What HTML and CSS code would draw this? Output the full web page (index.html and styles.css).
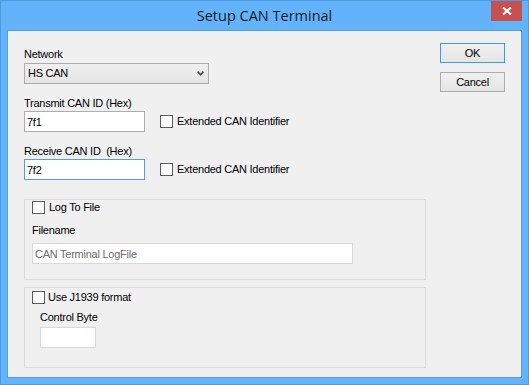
FILE: index.html
```
<!DOCTYPE html>
<html lang="en">
<head>
  <meta charset="UTF-8">
  <title>Setup CAN Terminal</title>
  <link rel="stylesheet" href="styles.css">
</head>
<body>
  <div class="window">
    <div class="titlebar">
      <h1 class="title">Setup CAN Terminal</h1>
      <button class="close" type="button" aria-label="Close">
        <svg width="10" height="8" viewBox="0 0 10 8">
          <path d="M1 0.5 L9 7.5 M9 0.5 L1 7.5" stroke="#fff" stroke-width="2" fill="none"/>
        </svg>
      </button>
    </div>

    <div class="client">
      <form class="form">
        <label class="label">Network</label>
        <div class="combo">
          <span>HS CAN</span>
          <svg width="7" height="5" viewBox="0 0 7 5">
            <path d="M0.6 0.6 L3.5 3.8 L6.4 0.6" stroke="#4a4a4a" stroke-width="1.6" fill="none"/>
          </svg>
        </div>

        <label class="label gap-top" for="txId">Transmit CAN ID (Hex)</label>
        <div class="id-row">
          <input class="textbox id-box" id="txId" type="text" value="7f1">
          <label class="check ext"><input type="checkbox"> Extended CAN Identifier</label>
        </div>

        <label class="label gap-top" for="rxId">Receive CAN ID&nbsp; (Hex)</label>
        <div class="id-row">
          <input class="textbox id-box focused" id="rxId" type="text" value="7f2">
          <label class="check ext"><input type="checkbox"> Extended CAN Identifier</label>
        </div>

        <div class="group log-group">
          <label class="check"><input type="checkbox"> Log To File</label>
          <label class="label filename-label" for="logName">Filename</label>
          <input class="textbox disabled filename" id="logName" type="text" value="CAN Terminal LogFile" disabled>
        </div>

        <div class="group j1939-group">
          <label class="check narrow"><input type="checkbox"> Use J1939 format</label>
          <label class="label control-label" for="ctrlByte">Control Byte</label>
          <input class="textbox disabled control-box" id="ctrlByte" type="text" disabled>
        </div>
      </form>

      <div class="actions">
        <button class="btn default" type="button">OK</button>
        <button class="btn" type="button">Cancel</button>
      </div>
    </div>
  </div>
</body>
</html>
```

FILE: styles.css
```
/* Reset */
* {
  margin: 0;
  padding: 0;
  box-sizing: border-box;
}

body {
  font-family: 'Liberation Sans', Arial, sans-serif;
  font-size: 11px;
  line-height: 13px;
  letter-spacing: -0.25px;
  color: #000;
  background-color: #fff;
}

/* Window frame */
.window {
  width: 529px;
  height: 385px;
  background-color: #63b3fc;
  border: 1px solid #4e9ade;
  display: flex;
  flex-direction: column;
}

.titlebar {
  height: 29px;
  display: grid;
  grid-template-columns: 1fr auto 1fr;
  align-items: start;
}

.title {
  grid-column: 2;
  font-family: 'Open Sans', 'Noto Sans', sans-serif;
  font-size: 14.5px;
  font-weight: 400;
  line-height: 29px;
  letter-spacing: 0;
  color: #1b1b1b;
}

.close {
  grid-column: 3;
  justify-self: end;
  margin-right: 6px;
  width: 31px;
  height: 20px;
  border: none;
  background-color: #c75050;
  display: flex;
  align-items: center;
  justify-content: center;
}

.client {
  flex: 1;
  margin: 0 6px 6px;
  background-color: #f0f0f0;
  border: 1px solid #5a9ad8;
  display: flex;
  align-items: flex-start;
  padding-top: 12px;
}

/* Form column */
.form {
  width: 418px;
  padding: 5px 0 0 16px;
}

.label {
  display: block;
  height: 13px;
}

.gap-top {
  margin-top: 13px;
}

.combo {
  margin-top: 2px;
  width: 185px;
  height: 21px;
  border: 1px solid #acacac;
  background: linear-gradient(#f0f0f0, #e5e5e5);
  display: flex;
  align-items: center;
  justify-content: space-between;
  padding: 0 4px 0 3px;
}

.id-row {
  margin-top: 1px;
  display: flex;
  align-items: center;
}

.textbox {
  height: 21px;
  border: 1px solid #abadb3;
  background-color: #fff;
  padding: 0 2px;
  font-family: inherit;
  font-size: 11px;
  letter-spacing: inherit;
  color: #000;
  outline: none;
}

.id-box {
  width: 121px;
}

.textbox.focused {
  border-color: #569de5;
}

.textbox.disabled {
  border-color: #d9d9d9;
  color: #6d6d6d;
  background-color: #fff;
}

.check {
  display: flex;
  align-items: center;
  gap: 4px;
  height: 13px;
}

.check.narrow {
  gap: 3px;
}

.check input {
  appearance: none;
  width: 13px;
  height: 13px;
  border: 1px solid #5c5c5c;
  background-color: #fff;
}

.ext {
  margin-left: 15px;
}

/* Group boxes */
.group {
  width: 402px;
  height: 81px;
  border: 1px solid #dcdcdc;
  padding-left: 7px;
}

.log-group {
  margin-top: 19px;
  padding-top: 1px;
}

.filename-label {
  margin-top: 10px;
}

.filename {
  margin-top: 6px;
  width: 321px;
}

.j1939-group {
  margin-top: 7px;
  padding-top: 3px;
}

.control-label {
  margin: 7px 0 0 8px;
}

.control-box {
  display: block;
  margin: 3px 0 0 8px;
  width: 56px;
}

/* Buttons */
.actions {
  margin-left: 14px;
  display: flex;
  flex-direction: column;
  gap: 9px;
}

.btn {
  width: 65px;
  height: 20px;
  border: 1px solid #acacac;
  background: linear-gradient(#f0f0f0, #e5e5e5);
  font-family: inherit;
  font-size: 11px;
  letter-spacing: inherit;
  color: #000;
}

.btn.default {
  border-color: #3c9bf0;
}
```
